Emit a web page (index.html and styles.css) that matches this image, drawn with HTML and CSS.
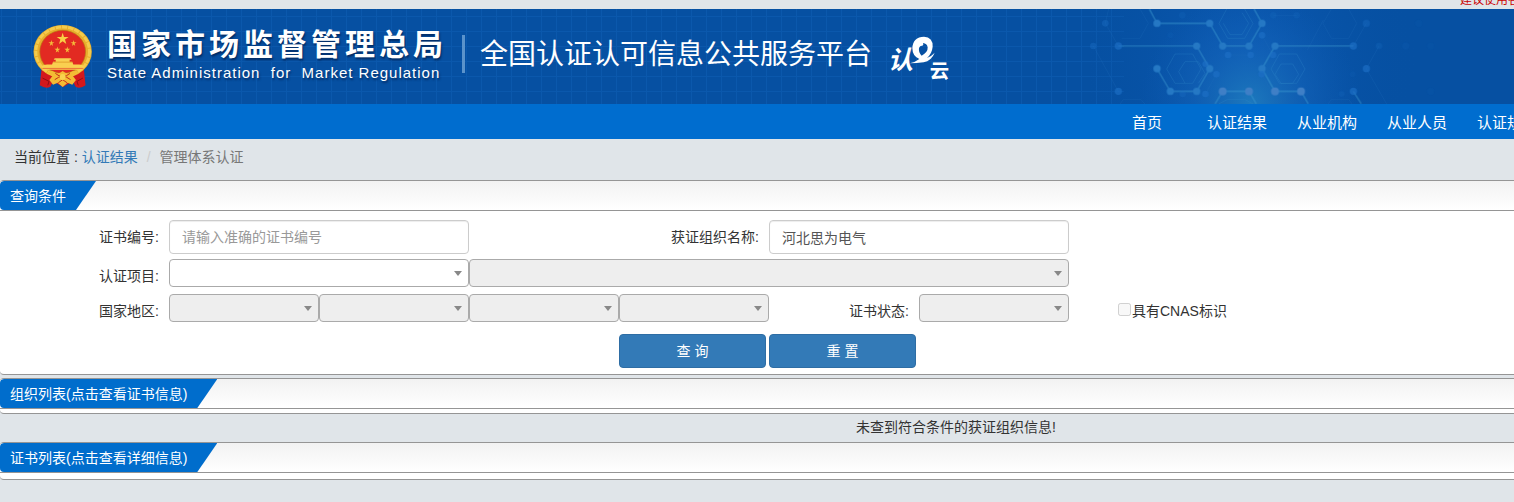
FILE: index.html
```html
<!DOCTYPE html>
<html lang="zh-CN">
<head>
<meta charset="utf-8">
<title>全国认证认可信息公共服务平台</title>
<link rel="stylesheet" href="styles.css">
</head>
<body>
<div class="notice"><span>建议使用谷歌</span></div>
<header class="banner">
  <svg class="molecules" viewBox="0 27 1272 285" aria-hidden="true">
    <defs>
      <radialGradient id="glow" gradientUnits="userSpaceOnUse" cx="480" cy="312" r="330">
        <stop offset="0" stop-color="#1f7dbf" stop-opacity=".9"/>
        <stop offset=".5" stop-color="#1464b8" stop-opacity=".55"/>
        <stop offset="1" stop-color="#0d5ab2" stop-opacity="0"/>
      </radialGradient>
      <radialGradient id="haze" gradientUnits="userSpaceOnUse" cx="470" cy="170" r="520">
        <stop offset="0" stop-color="#0f5fbb" stop-opacity=".8"/>
        <stop offset="1" stop-color="#0650a2" stop-opacity="0"/>
      </radialGradient>
    </defs>
    <rect y="27" width="1272" height="285" fill="url(#haze)"/>
    <rect y="27" width="1272" height="285" fill="url(#glow)"/>
    <g fill="none" stroke="#2f86c8" stroke-width="2" opacity=".45">
      <path d="M410 27L387 70L413 115H464L489 70L464 27M400 70L420 104H456L476 70L456 38"/>
      <path d="M255 162H308L333 207L308 250H255L230 207ZM285 185H325L345 220L325 250M285 185L266 215L285 250"/>
      <path d="M568 162H620L645 207L620 250H568L543 207ZM573 192H608L626 223L608 250H573L555 223Z"/>
      <path d="M386 312L413 298H464L489 312"/>
    </g>
    <g fill="none" stroke="#2672bf" stroke-width="2" opacity=".3">
      <path d="M56 27L46 70L85 138M95 115H150L175 70L150 27M724 27L699 70L724 115H776L800 70L776 27M829 70L790 138"/>
      <path d="M10 138L85 274M867 138L829 206L890 312M90 312L100 298H152L165 312M714 312L724 298H776L786 312M652 150L700 60M550 46H620M414 165H482M345 192L379 223L346 282"/>
      <path d="M516 106L549 165M515 223L549 282"/>
    </g>
    <g fill="none" stroke="#3d99d0" stroke-width="4" opacity=".75">
      <path d="M201 70H359L398 138H477L516 70L492 27M178 27L201 70" opacity=".75"/>
      <path d="M85 138H320L359 206L320 274H241L201 206" opacity=".7"/>
      <path d="M790 138H555L516 206L555 274H633L655 312" opacity=".75"/>
      <path d="M375 312L398 274H477L499 312M790 274L814 312" opacity=".7"/>
    </g>
    <g fill="#2578c4">
      <circle cx="201" cy="70" r="11"/><circle cx="359" cy="70" r="11"/><circle cx="516" cy="70" r="11"/>
      <circle cx="320" cy="138" r="11"/><circle cx="398" cy="138" r="11"/><circle cx="477" cy="138" r="11"/><circle cx="555" cy="138" r="11"/>
      <circle cx="201" cy="206" r="11"/><circle cx="359" cy="206" r="11"/><circle cx="516" cy="206" r="11"/>
      <circle cx="241" cy="274" r="11"/><circle cx="320" cy="274" r="11"/>
    </g>
    <g fill="#3f7fc6">
      <circle cx="398" cy="274" r="12"/><circle cx="477" cy="274" r="12"/><circle cx="555" cy="274" r="12"/><circle cx="633" cy="274" r="12"/>
    </g>
    <g fill="#1e70c6" opacity=".65">
      <circle cx="85" cy="138" r="11"/><circle cx="85" cy="274" r="11"/><circle cx="790" cy="138" r="11"/><circle cx="829" cy="206" r="11"/><circle cx="790" cy="274" r="11"/><circle cx="829" cy="70" r="11" opacity=".6"/><circle cx="46" cy="70" r="10" opacity=".6"/><circle cx="10" cy="138" r="10" opacity=".6"/><circle cx="867" cy="138" r="10" opacity=".4"/>
      <circle cx="414" cy="165" r="10"/><circle cx="482" cy="165" r="10"/><circle cx="549" cy="165" r="10"/><circle cx="516" cy="106" r="10"/><circle cx="379" cy="223" r="10"/><circle cx="515" cy="223" r="10"/><circle cx="346" cy="282" r="10"/><circle cx="346" cy="192" r="9"/><circle cx="278" cy="282" r="10" opacity=".5"/>
      <circle cx="550" cy="46" r="10" opacity=".3"/><circle cx="620" cy="46" r="10" opacity=".3"/><circle cx="277" cy="46" r="10" opacity=".3"/><circle cx="241" cy="106" r="9" opacity=".2"/><circle cx="947" cy="138" r="11" opacity=".2"/><circle cx="986" cy="70" r="11" opacity=".12"/><circle cx="1022" cy="138" r="11" opacity=".12"/><circle cx="1022" cy="274" r="11" opacity=".12"/><circle cx="755" cy="282" r="9" opacity=".3"/><circle cx="788" cy="223" r="9" opacity=".2"/>
    </g>
  </svg>
  <svg class="emblem" viewBox="0 0 180 190" role="img" aria-label="国徽">
    <path d="M26 126L20 182Q38 194 52 186L60 170L90 187L120 170L128 186Q142 194 158 182L152 126Z" fill="#d3181c"/>
    <path d="M28 160L48 170L44 182M150 160L132 170L136 182" stroke="#8f0c14" stroke-width="3" fill="none"/>
    <ellipse cx="89" cy="80" rx="88" ry="80" fill="#e8ae2c"/>
    <ellipse cx="89" cy="80" rx="81" ry="74" fill="none" stroke="#f5cb4c" stroke-width="9" stroke-dasharray="16 3"/>
    <ellipse cx="89" cy="81" rx="69" ry="65" fill="#e22a22" stroke="#b77912" stroke-width="2"/>
    <path d="M89 23L93 36H107L96 44L100 57L89 49L78 57L82 44L71 36H85Z" fill="#f9cf45"/>
    <g fill="#f4bd3a">
      <path id="small-star" d="M55 45L57 52H64L58 56L60 63L55 59L50 63L52 56L46 52H53Z"/>
      <use href="#small-star" x="67"/><use href="#small-star" x="18" y="20"/><use href="#small-star" x="48" y="20"/>
    </g>
    <path d="M65 100H113L116 105H110V111H118L121 119H139Q150 119 153 126L148 135H30L25 126Q30 119 42 119H57L60 111H68V105H62Z" fill="#f9d050"/>
    <path d="M60 112H118" stroke="#d88d1b" stroke-width="2"/>
    <path d="M28 131H150" stroke="#e5452d" stroke-width="2"/>
    <path d="M42 144Q52 134 66 143Q75 151 89 139Q103 151 112 143Q126 134 136 144L120 154L129 166L118 180L104 174L89 187L74 174L60 180L49 166L58 154Z" fill="#f4bb34"/>
    <path d="M67 146Q89 165 111 146M65 165Q89 145 113 165M76 174L89 165L102 174" stroke="#c52c18" stroke-width="3" fill="none"/>
    <circle cx="89" cy="157" r="9" fill="#f8d44e"/>
  </svg>
  <div class="agency">
    <div class="agency-zh">国家市场监督管理总局</div>
    <div class="agency-en">State Administration&nbsp; for&nbsp; Market Regulation</div>
  </div>
  <h1 class="platform">全国认证认可信息公共服务平台</h1>
  <svg class="cloud-logo" viewBox="567 108 186 138" role="img" aria-label="认e云">
    <text class="logo-ren" x="566" y="208">认</text>
    <path d="M632 190Q650 186 661 177Q640 168 640 144Q642 111 675 110Q702 111 701 140Q699 160 684 174Q696 170 707 158Q697 183 674 187Q652 190 632 190ZM668 167Q687 157 686 142Q684 130 672 129Q675 135 670 137Q663 136 660 144Q658 158 668 167Z" fill="#fff" fill-rule="evenodd"/>
    <text class="logo-yun" x="692" y="233">云</text>
  </svg>
</header>
<nav class="menu">
  <a href="#">首页</a><a href="#">认证结果</a><a href="#">从业机构</a><a href="#">从业人员</a><a href="#">认证规则</a>
</nav>
<div class="crumbs">当前位置 : <a href="#">认证结果</a><span class="slash">/</span><span class="current">管理体系认证</span></div>

<main>
  <section class="panel">
    <div class="panel-head"><h2 class="tab">查询条件</h2></div>
    <form class="query">
      <div class="row">
        <label for="cert-no">证书编号:</label>
        <input class="text span-2" id="cert-no" type="text" placeholder="请输入准确的证书编号">
        <label class="span-2" for="org">获证组织名称:</label>
        <input class="text span-2" id="org" type="text" value="河北思为电气">
      </div>
      <div class="row">
        <label for="item">认证项目:</label>
        <div class="pick span-2"><select id="item"><option></option></select></div>
        <div class="pick span-4"><select aria-label="认证项目明细" disabled><option></option></select></div>
      </div>
      <div class="row">
        <label for="country">国家地区:</label>
        <div class="pick"><select id="country" disabled><option></option></select></div>
        <div class="pick"><select aria-label="省" disabled><option></option></select></div>
        <div class="pick"><select aria-label="市" disabled><option></option></select></div>
        <div class="pick"><select aria-label="县" disabled><option></option></select></div>
        <label for="status">证书状态:</label>
        <div class="pick"><select id="status" disabled><option></option></select></div>
        <label class="check" for="cnas"><input id="cnas" type="checkbox" disabled>具有CNAS标识</label>
      </div>
      <div class="row">
        <div class="actions"><button type="button">查 询</button><button type="reset">重 置</button></div>
      </div>
    </form>
  </section>
  <section class="panel">
    <div class="panel-head"><h2 class="tab">组织列表(点击查看证书信息)</h2></div>
    <div class="panel-foot"></div>
  </section>
  <p class="empty">未查到符合条件的获证组织信息!</p>
  <section class="panel">
    <div class="panel-head"><h2 class="tab">证书列表(点击查看详细信息)</h2></div>
    <div class="panel-foot tall"></div>
  </section>
</main>
</body>
</html>
```

FILE: styles.css
```css
* {
  box-sizing: border-box;
}

body {
  margin: 0;
  overflow-x: hidden;
  background: #e0e5e9;
  color: #333;
  font: 14px/20px "Liberation Sans", "Noto Sans CJK SC", sans-serif;
}

.notice {
  display: flex;
  justify-content: flex-end;
  align-items: flex-end;
  height: 9px;
  margin-right: -18px;
  overflow: hidden;
  color: #c00;
  font-size: 12px;
  line-height: 18px;
}

.banner {
  position: relative;
  display: flex;
  align-items: flex-start;
  height: 95px;
  padding: 16px 0 0 33px;
  overflow: hidden;
  background: #0650a2;
  color: #fff;
  white-space: nowrap;
}

.banner::before {
  content: "";
  position: absolute;
  inset: 0 390px 0 0;
  background:
    repeating-linear-gradient(90deg, transparent 0 1px, #0b58ac 1px 2px, transparent 2px 15px),
    repeating-linear-gradient(180deg, transparent 0 7px, #0b58ac 7px 8px, transparent 8px 15px);
}

.banner > * {
  position: relative;
  flex: none;
}

.banner .molecules {
  position: absolute;
  top: 0;
  right: 0;
  width: 424px;
  height: 95px;
}

.emblem {
  width: 60px;
  height: 63px;
}

.agency {
  width: 341px;
  margin: 2px 14px 0;
  text-shadow: 1px 2px 2px rgba(0, 20, 60, .6);
}

.agency-zh {
  font-size: 30px;
  font-weight: 700;
  line-height: 36px;
  letter-spacing: 4px;
}

.agency-en {
  font-size: 15px;
  line-height: 20px;
  letter-spacing: 1px;
}

.platform {
  margin: 10px 0 0;
  padding-left: 18px;
  font-size: 28px;
  font-weight: 400;
  line-height: 40px;
}

.platform::before {
  content: "";
  position: absolute;
  top: 0;
  left: 0;
  width: 3px;
  height: 38px;
  background: #5b93cb;
}

.cloud-logo {
  width: 62px;
  height: 46px;
  margin: 11px 0 0 16px;
}

.cloud-logo text {
  fill: #fff;
  font-weight: 700;
}

.logo-ren {
  font-size: 76px;
  font-style: italic;
}

.logo-yun {
  font-size: 58px;
}

.menu {
  display: flex;
  justify-content: flex-end;
  margin-right: -38px;
  padding-top: 2px;
  background: #006dcf;
}

.menu a {
  width: 90px;
  color: #fff;
  font-size: 15px;
  line-height: 33px;
  text-align: center;
  text-decoration: none;
}

.crumbs {
  padding: 8px 14px 13px;
}

.crumbs a {
  color: #337ab7;
  text-decoration: none;
}

.slash {
  padding: 0 9px;
  color: #ccc;
}

.current {
  color: #777;
}

.panel {
  margin-bottom: 3px;
  overflow: hidden;
  border: solid #959595;
  border-width: 1px 0;
  border-radius: 4px 0 0 4px;
  background: #fff;
}

.panel-head {
  display: flex;
  border-bottom: 1px solid #959595;
  background: linear-gradient(#f2f2f2, #fff);
}

.tab {
  margin: 0;
  padding: 2px 30px 0 10px;
  border-radius: 4px 0 0 4px;
  background: #006dcc;
  clip-path: polygon(0 0, 100% 0, calc(100% - 20px) 100%, 0 100%);
  color: #fff;
  font-size: 14px;
  font-weight: 400;
  line-height: 27px;
}

.panel-foot {
  height: 4px;
}

.panel-foot.tall {
  height: 6px;
}

.query {
  padding: 9px 0 6px;
}

.row {
  display: grid;
  grid-template-columns: 169fr repeat(6, 150fr) 445fr;
  align-items: start;
  margin-bottom: 5px;
}

.row:nth-child(2) {
  margin-bottom: 7px;
}

.row:nth-child(3) {
  margin-bottom: 12px;
}

.row:last-child {
  margin-bottom: 0;
}

.row label {
  padding: 7px 10px 0 0;
  text-align: right;
}

.span-2,
.row .span-2 {
  grid-column: span 2;
}

.span-4 {
  grid-column: span 4;
}

.text {
  width: 100%;
  height: 34px;
  padding: 6px 12px;
  border: 1px solid #ccc;
  border-radius: 4px;
  background: #fff;
  box-shadow: inset 0 1px 1px rgba(0, 0, 0, .075);
  color: #555;
  font: inherit;
}

.text::placeholder {
  color: #999;
  opacity: 1;
}

.pick {
  position: relative;
}

.pick::after {
  content: "";
  position: absolute;
  top: 12px;
  right: 7px;
  border: solid transparent;
  border-width: 5px 4px 0;
  border-top-color: #888;
  pointer-events: none;
}

.pick select {
  display: block;
  width: 100%;
  height: 28px;
  border: 1px solid #aaa;
  border-radius: 4px;
  appearance: none;
  background: #fff;
  font: inherit;
}

.pick select:disabled {
  background: #eee;
  opacity: 1;
}

.row .check {
  display: flex;
  padding-left: 49px;
}

.check input {
  width: 13px;
  height: 13px;
  margin: 2px 1px 0 0;
}

.actions {
  display: flex;
  grid-column: 5 / -1;
  gap: 3px;
}

.actions button {
  width: 147px;
  height: 34px;
  padding: 0;
  border: 1px solid #2e6da4;
  border-radius: 4px;
  background: #337ab7;
  color: #fff;
  font: inherit;
}

.empty {
  margin: 0;
  padding: 0 0 5px 398px;
  text-align: center;
}
```
